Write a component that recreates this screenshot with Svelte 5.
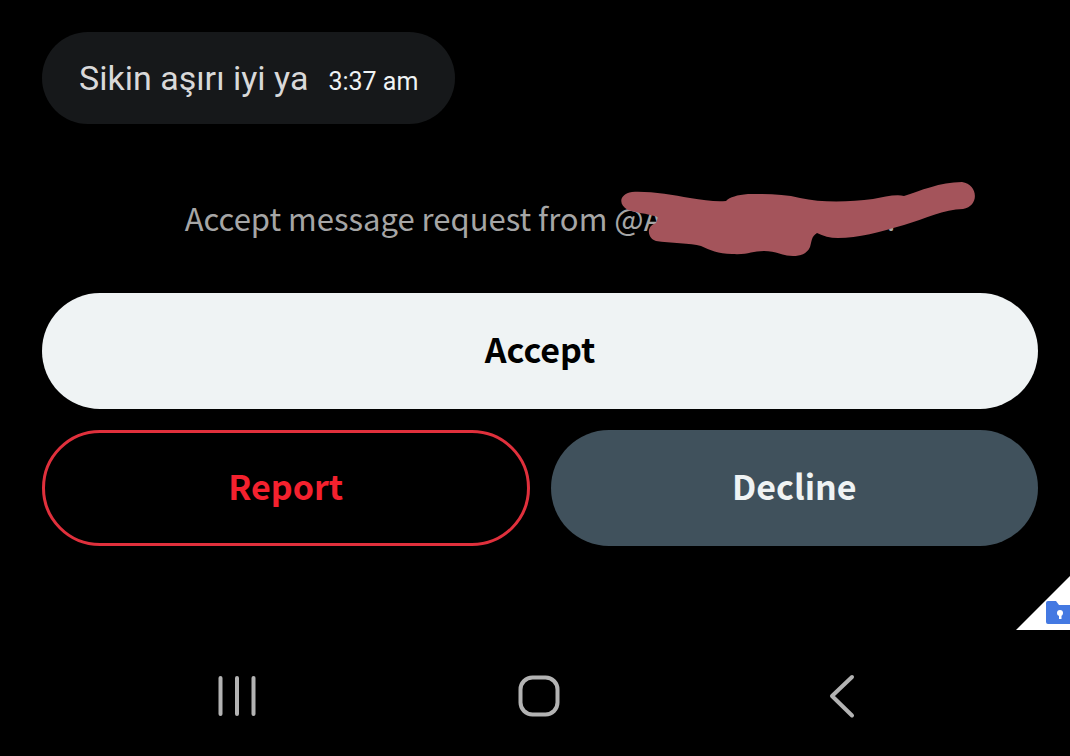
<script lang="ts">
    type Action = {
        label: string;
        kind: 'accept' | 'report' | 'decline';
    };

    const message = { text: 'Sikin aşırı iyi ya', time: '3:37 am' };
    const actions: Action[] = [
        { label: 'Accept', kind: 'accept' },
        { label: 'Report', kind: 'report' },
        { label: 'Decline', kind: 'decline' },
    ];
</script>

<div class="screen">
    <main>
        <div class="bubble">
            <span class="text">{message.text}</span>
            <time>{message.time}</time>
        </div>

        <p class="request">
            Accept message request from
            <span class="handle">
                <span>@A</span>
                <span>.</span>
                <svg class="scribble" viewBox="620 181 356 77" aria-hidden="true">
                    <path
                        d="M632 192 C650 191 672 195 690 198 C704 200 715 202 726 201 C730 197 737 195 748 194 C765 194 784 194 800 198 C822 203 850 202 873 199 C884 197 896 194 904 196 C920 191 940 182 962 182 C978 184 980 206 963 209 C944 209 925 219 904 225 C880 232 858 238 838 238 C830 238 823 236 817 233 C811 237 812 241 810 247 C807 254 800 256 793 256 C783 256 776 251 764 251 C752 251 748 255 732 254 C718 254 710 250 701 246 C691 243 670 243 656 241 C647 238 646 226 656 223 L658 217 C645 213 637 213 628 210 C618 205 619 194 632 192 Z"
                    />
                </svg>
            </span>
        </p>

        <div class="actions">
            {#each actions as action}
                <button type="button" class={action.kind}>{action.label}</button>
            {/each}
        </div>
    </main>

    <div class="corner">
        <svg width="54" height="54" viewBox="0 0 54 54" aria-hidden="true">
            <path fill="#fff" d="M0 54 L54 0 V54 Z" />
            <path fill="#4479e2" d="M32 25 H40 L43 29 H54 V48 H32 Q30 48 30 46 V27 Q30 25 32 25 Z" />
            <circle cx="44" cy="37" r="3" fill="#fff" />
            <path fill="#fff" d="M43 38 H45.500 V43 H43 Z" />
        </svg>
    </div>

    <nav>
        <button type="button" aria-label="Recent apps">
            <svg width="48" height="48" viewBox="0 0 48 48">
                <path d="M7.500 6 V42 M24 6 V42 M40.500 6 V42" />
            </svg>
        </button>
        <button type="button" aria-label="Home">
            <svg width="48" height="48" viewBox="0 0 48 48">
                <rect x="4.500" y="5.500" width="37" height="37" rx="12" />
            </svg>
        </button>
        <button type="button" aria-label="Back">
            <svg width="48" height="48" viewBox="0 0 48 48">
                <path d="M33 5 L13 24 L33 43.500" />
            </svg>
        </button>
    </nav>
</div>

<style>
    :global(body) {
        margin: 0;
        background: #000;
    }

    .screen {
        background: #000;
        color: #d9d9d9;
        font-family: 'Noto Sans CJK SC', Roboto, sans-serif;
    }

    main {
        display: flex;
        flex-direction: column;
        align-items: flex-start;
        padding: 32px 32px 0 42px;
    }

    .bubble {
        display: flex;
        align-items: center;
        gap: 20px;
        padding: 22px 37px;
        border-radius: 46px;
        background: #16181a;
        font-family: Roboto, sans-serif;
        font-size: 34px;
        line-height: 48px;
    }

    time {
        padding-top: 8px;
        color: #eff3f4;
        font-size: 25px;
        line-height: 40px;
    }

    .request {
        align-self: stretch;
        margin: 70px 0 0;
        color: #a6a6a6;
        font-size: 31px;
        line-height: 48px;
        text-align: center;
    }

    .handle {
        display: inline-flex;
        justify-content: space-between;
        position: relative;
        width: 281px;
    }

    .scribble {
        position: absolute;
        top: -13px;
        left: 6px;
        width: 356px;
        height: 77px;
        fill: #a4545b;
    }

    .actions {
        display: grid;
        grid-template-columns: 1fr 1fr;
        gap: 21px;
        align-self: stretch;
        margin-top: 51px;
    }

    .actions button {
        height: 116px;
        padding: 0 24px 5px;
        border: 0;
        border-radius: 58px;
        font-family: inherit;
        font-size: 34px;
        font-weight: 700;
    }

    .actions .accept {
        grid-column: 1 / -1;
        background: #eff3f4;
        color: #000;
    }

    .actions .report {
        border: 3px solid #e0303c;
        background: transparent;
        color: #f4212e;
    }

    .actions .decline {
        background: #40515c;
        color: #eff3f4;
    }

    .corner {
        display: flex;
        justify-content: flex-end;
        align-items: flex-end;
        height: 84px;
    }

    nav {
        display: grid;
        grid-template-columns: repeat(3, 1fr);
        justify-items: center;
        padding: 42px 76px 36px 86px;
    }

    nav button {
        display: flex;
        padding: 0;
        border: 0;
        background: none;
    }

    nav svg {
        fill: none;
        stroke: #b3b3b3;
        stroke-width: 4;
        stroke-linecap: round;
        stroke-linejoin: round;
    }
</style>
